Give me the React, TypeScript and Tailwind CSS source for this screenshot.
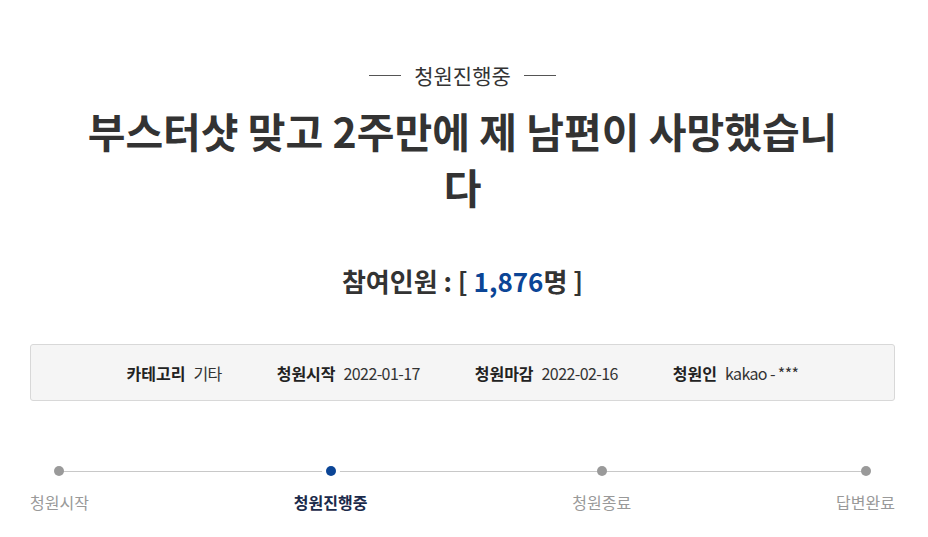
const font = { fontFamily: '"Noto Sans CJK KR", "Noto Sans", sans-serif' };

const info = [
  { label: '카테고리', value: '기타' },
  { label: '청원시작', value: '2022-01-17' },
  { label: '청원마감', value: '2022-02-16' },
  { label: '청원인', value: 'kakao - ***' },
];

const steps = [
  { name: '청원시작', active: false },
  { name: '청원진행중', active: true },
  { name: '청원종료', active: false },
  { name: '답변완료', active: false },
];

export default function App() {
  return (
    <div className="min-h-screen bg-white text-[#333]" style={font}>
      <div className="pl-[30px] pr-[33px] pt-[59px]">
        {/* status label */}
        <div className="flex items-center justify-center gap-[13px]">
          <span className="block w-[32px] h-px bg-[#555]" />
          <span className="text-[21px] leading-[32px] text-[#333]">청원진행중</span>
          <span className="block w-[32px] h-px bg-[#555]" />
        </div>

        <h1 className="mx-auto mt-[11px] w-[760px] text-center text-[41px] leading-[56px] font-bold text-[#333]">
          부스터샷 맞고 2주만에 제 남편이 사망했습니다
        </h1>

        <p className="mt-[49px] text-center text-[26px] leading-[36px] font-bold text-[#333]">
          참여인원 : [ <span className="text-[#0b4596]">1,876</span>명 ]
        </p>

        {/* info box */}
        <div className="mt-[45px] flex h-[57px] items-center justify-center gap-[55px] rounded-[3px] border border-[#d8d8d8] bg-[#f5f5f5] text-[16px]">
          {info.map(item => (
            <div key={item.label} className="flex items-center gap-[8px]">
              <span className="font-bold text-[#222]">{item.label}</span>
              <span className="text-[#333] tracking-[-0.6px]">{item.value}</span>
            </div>
          ))}
        </div>

        {/* progress */}
        <div className="relative mt-[65px] flex justify-between">
          <div className="absolute left-[28px] right-[28px] top-[5px] h-px bg-[#c8c8c8]" />
          {steps.map(step => (
            <div key={step.name} className="relative flex flex-col items-center">
              {step.active ? (
                <span className="block h-[10px] w-[10px] rounded-full bg-[#0b4596] ring-4 ring-white" />
              ) : (
                <span className="block h-[10px] w-[10px] rounded-full bg-[#9a9a9a]" />
              )}
              <span
                className={
                  step.active
                    ? 'mt-[15px] text-[16px] leading-[22px] font-bold text-[#1b2a4a]'
                    : 'mt-[15px] text-[16px] leading-[22px] text-[#999]'
                }
              >
                {step.name}
              </span>
            </div>
          ))}
        </div>
      </div>
    </div>
  );
}
